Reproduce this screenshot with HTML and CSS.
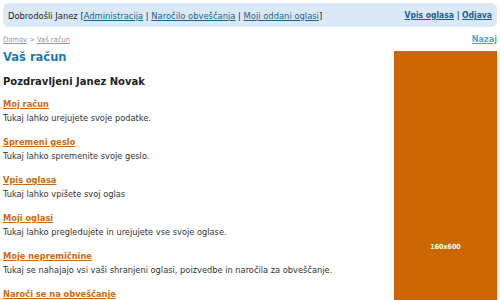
FILE: index.html
```html
<!doctype html>
<html lang="sl">
<head>
  <meta charset="utf-8" />
  <title>Vaš račun</title>
  <link rel="stylesheet" href="styles.css">
</head>
<body>
<div class="topbar">
  <div class="welcome">
    Dobrodošli Janez [<a href="#">Administracija</a> | <a href="#">Naročilo obveščanja</a> | <a href="#">Moji oddani oglasi</a>]
  </div>
  <div class="actions">
    <a href="#">Vpis oglasa</a> | <a href="#">Odjava</a>
  </div>
</div>

<div class="crumbs">
  <div class="path"><a href="#">Domov</a> &gt; <a href="#">Vaš račun</a></div>
  <a class="back" href="#">Nazaj</a>
</div>

<div class="page">
  <div class="main">
    <h1>Vaš račun</h1>
    <h2>Pozdravljeni Janez Novak</h2>

    <div class="item">
      <a href="#">Moj račun</a>
      <p>Tukaj lahko urejujete svoje podatke.</p>
    </div>
    <div class="item">
      <a href="#">Spremeni geslo</a>
      <p>Tukaj lahko spremenite svoje geslo.</p>
    </div>
    <div class="item">
      <a href="#">Vpis oglasa</a>
      <p>Tukaj lahko vpišete svoj oglas</p>
    </div>
    <div class="item">
      <a href="#">Moji oglasi</a>
      <p>Tukaj lahko pregledujete in urejujete vse svoje oglase.</p>
    </div>
    <div class="item">
      <a href="#">Moje nepremičnine</a>
      <p>Tukaj se nahajajo vsi vaši shranjeni oglasi, poizvedbe in naročila za obveščanje.</p>
    </div>
    <div class="item">
      <a href="#">Naroči se na obveščanje</a>
      <p>Tukaj se lahko naročite na obveščanje o novih oglasih.</p>
    </div>
  </div>
  <div class="ad">160x600</div>
</div>
</body>
</html>
```

FILE: styles.css
```css
*{box-sizing:border-box}
body{
  margin:0;
  padding:3px;
  font-family:"DejaVu Sans Condensed","DejaVu Sans",Verdana,sans-serif;
  font-size:9.2px;
  color:#333;
  background:#fff;
  height:300px;
  overflow:hidden;
}

/* ===== ZGORNJA VRSTICA ===== */
.topbar{
  display:flex;
  justify-content:space-between;
  align-items:center;
  height:24px;
  padding:0 5px;
  background:#dae8f7;
  border-radius:6px;
  font-size:9.3px;
  color:#222;
}
.topbar a{color:#1d5f8e}
.actions{font-weight:bold;color:#1d5f8e;font-size:8.5px}

/* ===== DROBTINE ===== */
.crumbs{
  display:flex;
  justify-content:space-between;
  align-items:flex-end;
  margin-top:5px;
  height:12px;
  font-size:7.5px;
  color:#999;
}
.crumbs .path a{color:#999}
.crumbs .back{
  color:#5b9fcb;
  font-size:9px;
  font-weight:bold;
}

/* ===== VSEBINA ===== */
.page{
  display:flex;
  gap:10px;
  margin-top:5px;
}
.main{flex:1}
h1{
  margin:0;
  font-family:"DejaVu Sans",Verdana,sans-serif;
  font-size:11.5px;
  color:#1b79b5;
  line-height:16px;
}
h2{
  margin:10px 0 0;
  font-family:"DejaVu Sans",Verdana,sans-serif;
  font-size:10px;
  color:#222;
  line-height:14px;
}

.item{margin-top:8px}
.item + .item{margin-top:11px}
.item a{
  display:inline-block;
  color:#cc6a10;
  font-weight:bold;
  font-size:9.2px;
  line-height:14px;
}
.item p{
  margin:0;
  line-height:13px;
}

.ad{
  width:103px;
  height:392px;
  margin-top:2px;
  background:#cc6600;
  color:#fff;
  font-weight:bold;
  font-size:7px;
  display:flex;
  align-items:center;
  justify-content:center;
  flex-shrink:0;
}
```
